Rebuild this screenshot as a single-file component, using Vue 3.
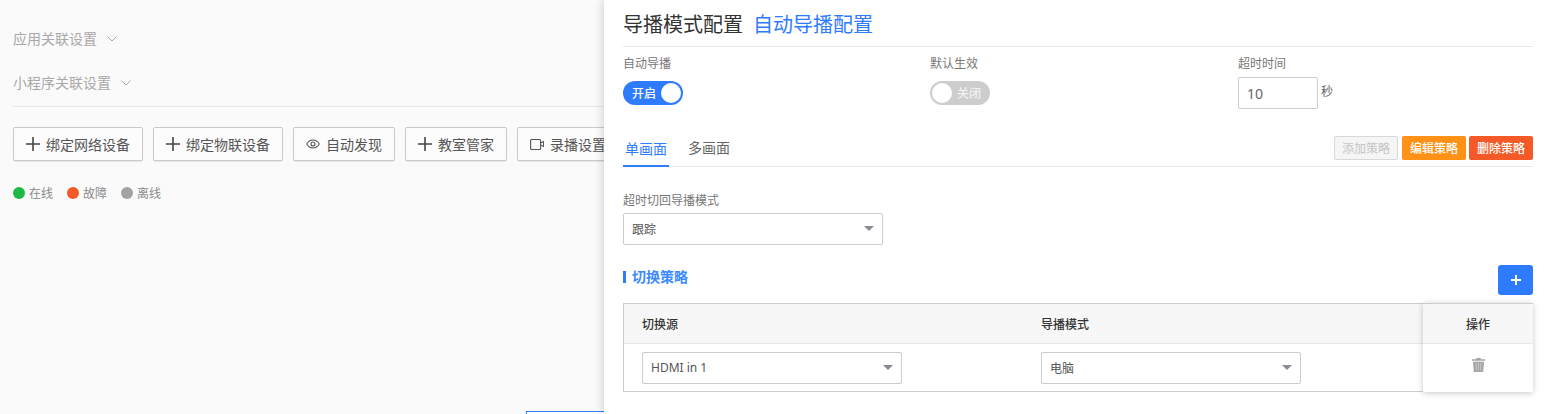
<script setup>
const actions = [
  { label: '绑定网络设备', icon: 'plus' },
  { label: '绑定物联设备', icon: 'plus' },
  { label: '自动发现', icon: 'eye' },
  { label: '教室管家', icon: 'plus' },
  { label: '录播设置', icon: 'video' }
]

const legend = [
  { label: '在线', color: '#1fba45' },
  { label: '故障', color: '#f45a27' },
  { label: '离线', color: '#a3a3a3' }
]

const rows = [
  { source: 'HDMI in 1', mode: '电脑' }
]
</script>

<template>
  <div class="page">
    <div class="main">
      <div class="collapse-title first">应用关联设置
        <svg class="chev" width="10" height="6" viewBox="0 0 10 6"><path d="M.5.5 5 5 9.500.5" fill="none" stroke="#a8a8a8" /></svg>
      </div>
      <div class="collapse-title second">小程序关联设置
        <svg class="chev" width="10" height="6" viewBox="0 0 10 6"><path d="M.5.5 5 5 9.500.5" fill="none" stroke="#a8a8a8" /></svg>
      </div>
      <div class="main-line"></div>
      <div class="actions">
        <button v-for="a in actions" :key="a.label" class="act-btn">
          <svg v-if="a.icon === 'plus'" class="act-plus" width="14" height="14" viewBox="0 0 14 14"><path d="M7 0v14M0 7h14" stroke="#444" stroke-width="1.600" /></svg>
          <svg v-else-if="a.icon === 'eye'" class="act-eye" width="14" height="10" viewBox="0 0 14 10"><path d="M.7 5C2.300 2.200 4.500 1 7 1s4.700 1.200 6.300 4C11.700 7.800 9.500 9 7 9S2.300 7.800.7 5Z" fill="none" stroke="#555" stroke-width="1.100" /><circle cx="7" cy="5" r="2" fill="none" stroke="#555" stroke-width="1.100" /></svg>
          <svg v-else class="act-video" width="14" height="11" viewBox="0 0 14 11"><path d="M.6 1.500a1 1 0 0 1 1-1h8a1 1 0 0 1 1 1v8a1 1 0 0 1-1 1h-8a1 1 0 0 1-1-1ZM10.600 4l3-1.500v5l-3-1.500" fill="none" stroke="#555" stroke-width="1.100" /></svg>
          {{ a.label }}
        </button>
      </div>
      <div class="legend">
        <span v-for="l in legend" :key="l.label" class="legend-item">
          <i class="dot" :style="{ background: l.color }"></i>{{ l.label }}
        </span>
      </div>
    </div>

    <div class="corner-box"></div>

    <aside class="drawer">
      <header class="head">
        <span class="head-title">导播模式配置</span>
        <span class="head-sub">自动导播配置</span>
      </header>

      <div class="settings">
        <div class="field">
          <label>自动导播</label>
          <div class="switch on"><span class="sw-text">开启</span><span class="knob"></span></div>
        </div>
        <div class="field">
          <label>默认生效</label>
          <div class="switch off"><span class="knob"></span><span class="sw-text">关闭</span></div>
        </div>
        <div class="field">
          <label>超时时间</label>
          <div class="timeout">
            <div class="num-input">10</div>
            <span class="unit">秒</span>
          </div>
        </div>
      </div>

      <div class="tabs">
        <span class="tab active">单画面</span>
        <span class="tab">多画面</span>
        <div class="tab-btns">
          <button class="mini disabled">添加策略</button>
          <button class="mini orange">编辑策略</button>
          <button class="mini red">删除策略</button>
        </div>
      </div>

      <div class="fallback">
        <label>超时切回导播模式</label>
        <div class="select wide">跟踪<i class="caret"></i></div>
      </div>

      <div class="section-row">
        <span class="section-title">切换策略</span>
        <button class="add-btn">
          <svg width="10" height="10" viewBox="0 0 10 10"><path d="M5 0v10M0 5h10" stroke="#fff" stroke-width="2" /></svg>
        </button>
      </div>

      <div class="table">
        <div class="t-row t-head">
          <div class="t-cell c-source">切换源</div>
          <div class="t-cell c-mode">导播模式</div>
        </div>
        <div v-for="r in rows" :key="r.source" class="t-row t-body">
          <div class="t-cell c-source"><div class="select">{{ r.source }}<i class="caret"></i></div></div>
          <div class="t-cell c-mode"><div class="select">{{ r.mode }}<i class="caret"></i></div></div>
        </div>
        <div class="fixed-col">
          <div class="fixed-head">操作</div>
          <div class="fixed-body">
            <svg width="13" height="14" viewBox="0 0 13 14"><path d="M4.500 0h4l.5 1.300h4v1.400H0V1.300h4ZM1 3.700h11L11.200 14H1.800Z" fill="#a6a6a6" /><path d="M4.300 5v7.500M6.500 5v7.500M8.700 5v7.500" stroke="#d4d4d4" stroke-width=".7" /></svg>
          </div>
        </div>
      </div>
    </aside>
  </div>
</template>

<style>
html, body {
  margin: 0;
  background: #fafafa;
}
</style>

<style scoped>
.page {
  position: relative;
  height: 414px;
  overflow: hidden;
  background: #fafafa;
  font-family: "Noto Sans", "Noto Sans CJK SC", sans-serif;
  font-size: 12px;
  color: #555;
}

/* left side behind the drawer */
.main {
  padding: 0 0 0 13px;
}

.collapse-title {
  display: flex;
  align-items: center;
  height: 20px;
  font-size: 14px;
  color: #a8a8a8;
}

.collapse-title.first {
  padding-top: 28px;
}

.collapse-title.second {
  padding-top: 24px;
}

.chev {
  margin: 1px 0 0 10px;
}

.main-line {
  height: 1px;
  margin-top: 14px;
  background: #e6e6e6;
}

.actions {
  display: flex;
  gap: 10px;
  margin-top: 20px;
}

.act-btn {
  display: flex;
  flex: none;
  align-items: center;
  justify-content: center;
  height: 34px;
  padding: 0 12px;
  box-sizing: border-box;
  background: #fcfcfc;
  border: 1px solid #c9c9c9;
  border-radius: 2px;
  box-shadow: 0 1px 1px rgba(0, 0, 0, .08);
  font: inherit;
  font-size: 14px;
  color: #555;
}

.act-plus {
  margin-right: 6px;
}

.act-eye {
  margin-right: 6px;
}

.act-video {
  margin-right: 6px;
}

.legend {
  display: flex;
  gap: 14px;
  margin-top: 23px;
}

.legend-item {
  display: flex;
  align-items: center;
  height: 18px;
  color: #8a8a8a;
}

.dot {
  width: 12px;
  height: 12px;
  margin-right: 4px;
  border-radius: 50%;
}

.corner-box {
  position: absolute;
  top: 411px;
  left: 526px;
  width: 100px;
  height: 20px;
  border: 1px solid #2f7bff;
  background: #fff;
}

/* drawer */
.drawer {
  position: absolute;
  top: 0;
  right: 0;
  bottom: 0;
  width: 947px;
  padding: 0 18px 0 19px;
  box-sizing: border-box;
  background: #fff;
  box-shadow: -2px 0 8px rgba(0, 0, 0, .15);
}

.head {
  display: flex;
  align-items: center;
  gap: 10px;
  height: 47px;
  padding-top: 3px;
  box-sizing: border-box;
  border-bottom: 1px solid #eaeaea;
  font-size: 20px;
  line-height: 1;
}

.head-title {
  color: #333;
}

.head-sub {
  color: #2f7bff;
}

.settings {
  display: grid;
  grid-template-columns: 307px 308px 1fr;
  padding-top: 8px;
}

.field label {
  display: block;
  height: 18px;
  line-height: 18px;
  color: #777;
}

.switch {
  display: flex;
  align-items: center;
  justify-content: space-between;
  width: 60px;
  height: 24px;
  margin-top: 8px;
  padding: 0 2px 0 9px;
  box-sizing: border-box;
  border-radius: 12px;
  color: #fff;
}

.switch.on {
  background: #2f7bff;
  font-weight: 500;
}

.switch.off {
  padding: 0 9px 0 2px;
  background: #cdcdcd;
  color: #f2f2f2;
  font-weight: 500;
}

.knob {
  width: 20px;
  height: 20px;
  border-radius: 50%;
  background: #fff;
}

.timeout {
  display: flex;
  align-items: center;
  gap: 3px;
  margin-top: 4px;
}

.num-input {
  display: flex;
  align-items: center;
  width: 80px;
  height: 32px;
  padding-left: 8px;
  box-sizing: border-box;
  background: #fff;
  border: 1px solid #ccc;
  border-radius: 2px;
  font-size: 14px;
  color: #666;
}

.unit {
  margin-top: -5px;
  color: #666;
}

.tabs {
  display: flex;
  align-items: flex-end;
  height: 38px;
  margin-top: 19px;
  border-bottom: 1px solid #eaeaea;
}

.tab {
  display: block;
  height: 37px;
  margin-right: 17px;
  padding: 0 2px;
  line-height: 37px;
  font-size: 14px;
  color: #666;
  box-sizing: border-box;
}

.tab.active {
  color: #2f7bff;
  border-bottom: 2px solid #2f7bff;
  margin-bottom: -1px;
}

.tab-btns {
  display: flex;
  align-self: flex-start;
  gap: 4px;
  margin-left: auto;
  margin-top: 8px;
}

.mini {
  width: 64px;
  height: 24px;
  padding: 0;
  box-sizing: border-box;
  border: 0;
  border-radius: 2px;
  font: inherit;
  font-weight: 500;
  color: #fff;
}

.mini.disabled {
  background: #f5f5f5;
  border: 1px solid #d8d8d8;
  color: #c4c4c4;
  font-weight: 400;
}

.mini.orange {
  background: #ff9116;
}

.mini.red {
  width: 64px;
  margin-left: -1px;
  background: #f45a27;
}

.fallback {
  margin-top: 25px;
}

.fallback label {
  display: block;
  height: 18px;
  line-height: 18px;
  margin-bottom: 3px;
  color: #777;
}

.select {
  position: relative;
  display: flex;
  align-items: center;
  width: 260px;
  height: 32px;
  padding-left: 8px;
  box-sizing: border-box;
  background: #fff;
  border: 1px solid #ccc;
  border-radius: 2px;
  color: #555;
}

.caret {
  position: absolute;
  top: 12px;
  right: 8px;
  width: 0;
  height: 0;
  border-left: 5px solid transparent;
  border-right: 5px solid transparent;
  border-top: 5px solid #8a8a94;
}

.section-row {
  display: flex;
  align-items: flex-start;
  justify-content: space-between;
  height: 38px;
  margin-top: 20px;
}

.section-title {
  display: block;
  height: 12px;
  margin-top: 6px;
  padding-left: 6px;
  line-height: 12px;
  border-left: 3px solid #2f7bff;
  font-size: 14px;
  font-weight: 700;
  color: #3c8aff;
}

.add-btn {
  display: flex;
  align-items: center;
  justify-content: center;
  width: 35px;
  height: 30px;
  padding: 0;
  border: 0;
  border-radius: 3px;
  background: #2f7bff;
}

.table {
  position: relative;
  height: 89px;
  box-sizing: border-box;
  border: 1px solid #ccc;
}

.t-row {
  display: flex;
}

.t-head {
  height: 40px;
  align-items: center;
  background: #f7f7f7;
  border-bottom: 1px solid #e8e8e8;
  box-sizing: border-box;
  color: #333;
  font-weight: 500;
}

.t-body {
  height: 47px;
  align-items: center;
}

.t-cell {
  box-sizing: border-box;
}

.c-source {
  width: 417px;
  padding-left: 18px;
}

.c-mode {
  width: 399px;
}

.fixed-col {
  position: absolute;
  top: -1px;
  right: -1px;
  bottom: -1px;
  width: 110px;
  background: #fff;
  box-shadow: 0 1px 6px rgba(0, 0, 0, .22);
}

.fixed-head {
  display: flex;
  align-items: center;
  justify-content: center;
  height: 41px;
  padding-top: 1px;
  box-sizing: border-box;
  background: #f7f7f7;
  border-top: 1px solid #ccc;
  border-bottom: 1px solid #e8e8e8;
  font-weight: 500;
  color: #333;
}

.fixed-body {
  display: flex;
  justify-content: center;
  padding-top: 14px;
}
</style>
